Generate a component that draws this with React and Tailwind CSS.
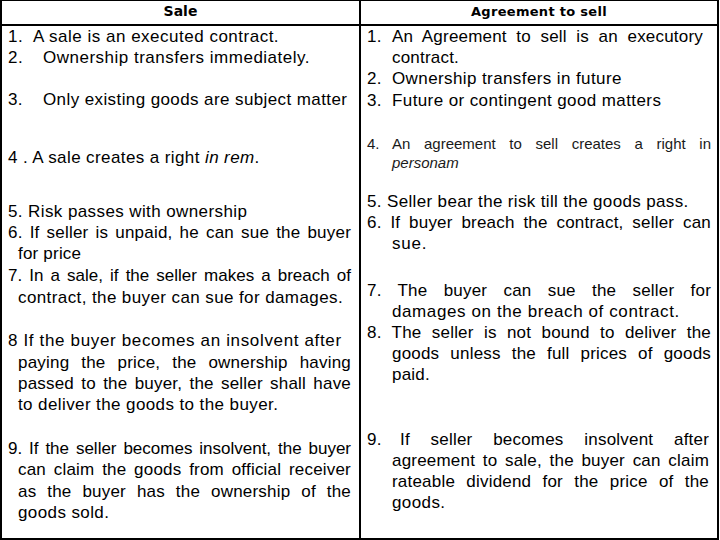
import React from "react";

const J = ({ className = "", children }) => (
  <div className={"text-justify [text-align-last:justify] " + className}>{children}</div>
);

export default function App() {
  return (
    <div className="w-[720px] h-[540px] bg-white overflow-hidden">
      <div
        className="w-[719px] h-[540px] border-2 border-t border-black flex flex-col text-black text-[17px] leading-[21.2px] tracking-[0.2px]"
        style={{ fontFamily: '"Liberation Sans", Arial, sans-serif' }}
      >
        {/* header */}
        <div className="grid grid-cols-[359px_1fr] h-[25px] border-b-2 border-black">
          <div
            className="border-r-2 border-black flex items-center justify-center font-bold text-[14px] tracking-normal pb-[2px]"
            style={{ fontFamily: '"Comic Sans MS", "DejaVu Sans", sans-serif' }}
          >
            Sale
          </div>
          <div
            className="flex items-center justify-center font-bold text-[13px] tracking-[0.3px] pb-[2px]"
            style={{ fontFamily: '"Comic Sans MS", "DejaVu Sans", sans-serif' }}
          >
            Agreement to sell
          </div>
        </div>

        {/* body */}
        <div className="grid grid-cols-[359px_1fr] flex-1">
          {/* left column */}
          <div className="border-r-2 border-black pl-[6px] pr-[8px]">
            <div className="flex tracking-[0.5px]">
              <span className="w-[25px]">1.</span>
              <span>A sale is an executed contract.</span>
            </div>
            <div className="flex tracking-[0.5px]">
              <span className="w-[35px]">2.</span>
              <span>Ownership transfers immediately.</span>
            </div>
            <div className="flex mt-[21px]">
              <span className="w-[35px]">3.</span>
              <span className="tracking-[0.4px]">Only existing goods are subject matter</span>
            </div>
            <div className="mt-[36px] tracking-[0.4px]">
              4 . A sale creates a right <i>in rem</i>.
            </div>
            <div className="mt-[33px] tracking-[0.4px]">5. Risk passes with ownership</div>
            <J>6. If seller is unpaid, he can sue the buyer</J>
            <div className="ml-[10px]">for price</div>
            <div className="mt-[1px]">
              <J className="tracking-normal">7. In a sale, if the seller makes a breach of</J>
              <div className="ml-[10px] tracking-[0.4px]">contract, the buyer can sue for damages.</div>
            </div>
            <div className="mt-[22.6px]">
              <div className="tracking-[0.65px]">8 If the buyer becomes an insolvent after</div>
              <J className="ml-[10px]">paying the price, the ownership having</J>
              <J className="ml-[10px]">passed to the buyer, the seller shall have</J>
              <div className="ml-[10px] tracking-[0.4px]">to deliver the goods to the buyer.</div>
            </div>
            <div className="mt-[23px]">
              <J className="tracking-normal">9. If the seller becomes insolvent, the buyer</J>
              <J className="ml-[10px]">can claim the goods from official receiver</J>
              <J className="ml-[10px]">as the buyer has the ownership of the</J>
              <div className="ml-[10px] tracking-[0.4px]">goods sold.</div>
            </div>
          </div>

          {/* right column */}
          <div className="pl-[6px] pr-[6px]">
            <div className="flex mr-[8px]">
              <span className="w-[25px] shrink-0">1.</span>
              <J className="flex-1">An Agreement to sell is an executory</J>
            </div>
            <div className="ml-[25px]">contract.</div>
            <div className="flex tracking-[0.4px]">
              <span className="w-[25px] shrink-0">2.</span>
              <span>Ownership transfers in future</span>
            </div>
            <div className="flex tracking-[0.4px]">
              <span className="w-[25px] shrink-0">3.</span>
              <span>Future or contingent good matters</span>
            </div>
            <div className="mt-[23.5px] text-[15px] leading-[19px] text-[#1a1a1a] tracking-normal">
              <div className="flex">
                <span className="w-[25px] shrink-0">4.</span>
                <J className="flex-1">An agreement to sell creates a right in</J>
              </div>
              <div className="ml-[25px] italic">personam</div>
            </div>
            <div className="mt-[18.2px] tracking-[0.35px]">5. Seller bear the risk till the goods pass.</div>
            <J>6. If buyer breach the contract, seller can</J>
            <div className="ml-[25px] tracking-[0.8px]">sue.</div>
            <div className="mt-[25.4px]">
              <J>7. The buyer can sue the seller for</J>
              <div className="ml-[25px] tracking-[0.6px]">damages on the breach of contract.</div>
              <J>8. The seller is not bound to deliver the</J>
              <J className="ml-[25px]">goods unless the full prices of goods</J>
              <div className="ml-[25px]">paid.</div>
            </div>
            <div className="mt-[43px] mr-[2px]">
              <div className="flex">
                <span className="w-[33px] shrink-0">9.</span>
                <J className="flex-1">If seller becomes insolvent after</J>
              </div>
              <J className="ml-[25px]">agreement to sale, the buyer can claim</J>
              <J className="ml-[25px]">rateable dividend for the price of the</J>
              <div className="ml-[25px] tracking-[0.4px]">goods.</div>
            </div>
          </div>
        </div>
      </div>
    </div>
  );
}
